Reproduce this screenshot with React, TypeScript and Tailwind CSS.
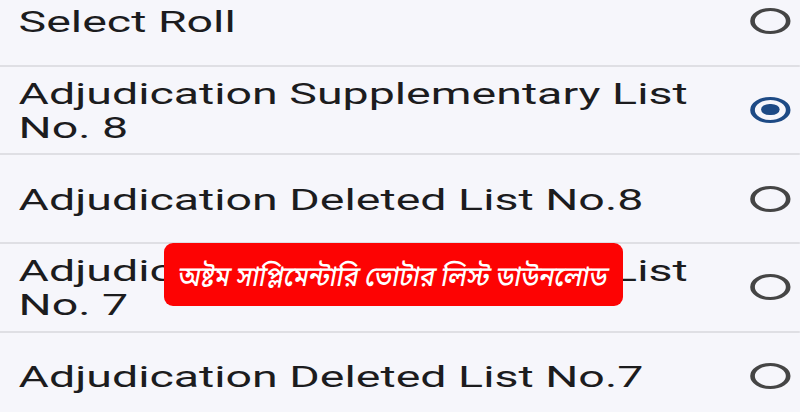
import React from "react";

const rows: { label: string; selected?: boolean }[] = [
  { label: "Select Roll" },
  { label: "Adjudication Supplementary List No. 8", selected: true },
  { label: "Adjudication Deleted List No.8" },
  { label: "Adjudication Supplementary List No. 7" },
  { label: "Adjudication Deleted List No.7" },
];

function Radio({ selected }: { selected?: boolean }) {
  if (selected) {
    return (
      <div className="w-[26px] h-[26px] rounded-full border-[3px] border-[#1d4a85] flex items-center justify-center shrink-0">
        <div className="w-[12px] h-[11px] rounded-full bg-[#1d4a85]" />
      </div>
    );
  }
  return <div className="w-[26px] h-[26px] rounded-full border-[3px] border-[#454545] shrink-0" />;
}

export default function App() {
  return (
    <div className="relative w-[800px] h-[412px] overflow-hidden bg-[#f6f6fb]">
      <div className="w-[516px] origin-top-left scale-x-[1.55] -mt-[22px]">
        {rows.map((r, i) => (
          <div
            key={i}
            className="h-[88.67px] border-b-2 border-[#dfdfe4] flex items-center pl-[12px] pr-[6px] gap-[10px]"
          >
            <div
              className="flex-1 text-[30px] leading-[34px] text-[#1c1c1e] pt-[2px]"
              style={{ fontFamily: "Roboto, 'Liberation Sans', sans-serif" }}
            >
              {r.label}
            </div>
            <Radio selected={r.selected} />
          </div>
        ))}
      </div>
      <div className="absolute left-[164px] top-[243px] w-[459px] h-[63px] rounded-[9px] bg-[#fd0303] flex items-center justify-center">
        <span
          className="text-white text-[28px] font-medium inline-block -skew-x-[12deg] scale-x-[0.9] whitespace-nowrap"
          style={{ fontFamily: "'Noto Sans', 'Noto Sans Bengali', sans-serif" }}
        >
          অষ্টম সাপ্লিমেন্টারি ভোটার লিস্ট ডাউনলোড
        </span>
      </div>
    </div>
  );
}
